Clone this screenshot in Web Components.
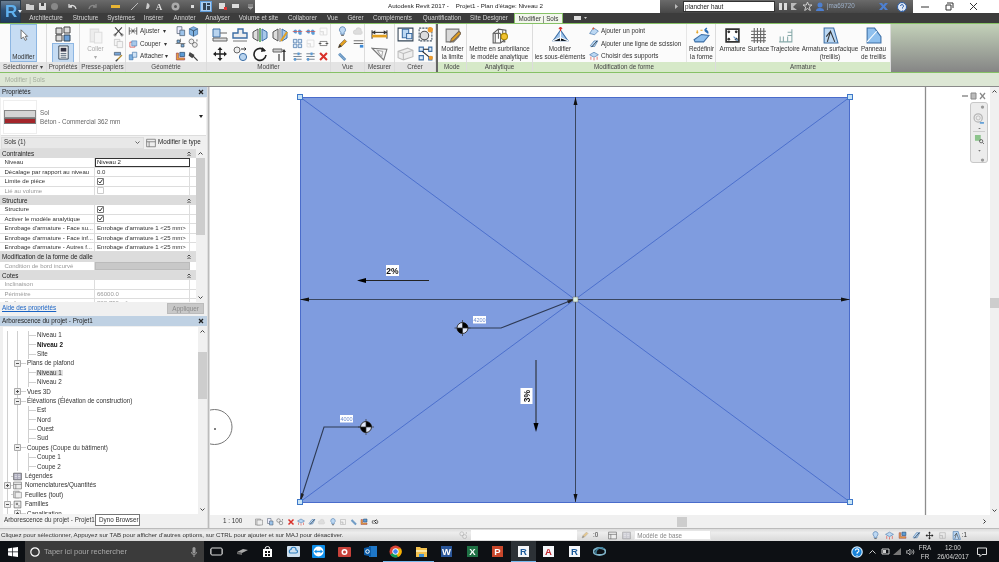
<!DOCTYPE html>
<html lang="fr">
<head>
<meta charset="utf-8">
<title>Revit</title>
<style>
	html, body { margin: 0; height: 100%; background: #fff; overflow: hidden; }
	body { font: 6.3px/1 "Liberation Sans", sans-serif; color: #222; }
</style>
</head>
<body>
<rv-app></rv-app>
<script>
// icon bodies, all on a 16x16 box
const ICONS = {
	cursor: '<path d="M5 1v11l3-2 2 4 2-1-2-4h3z" fill="#fff" stroke="#555"/>',
	panes: '<path d="M1 2h6v6H1zM9 1h6v6H9zM1 9h6v6H1z" fill="#ddd" stroke="#444"/><path d="M9 9h6v6H9z" fill="#6a9fd8" stroke="#345"/>',
	sheet: '<path d="M3 1h10v14H3z" fill="#f4f4f4" stroke="#345"/><path d="M5 3h6v4H5z" fill="#334"/><path d="M5 9h6M5 11h6M5 13h6" stroke="#567"/>',
	paste: '<path d="M3 2h8v12H3z" fill="#ddd" stroke="#bbb"/><path d="M7 5h7v10H7z" fill="#eee" stroke="#bbb"/>',
	scissors: '<path d="M3 2l10 11M13 2L3 13" stroke="#444" stroke-width="1.5"/><circle cx="3" cy="13" r="1.6" fill="none" stroke="#444"/><circle cx="13" cy="13" r="1.6" fill="none" stroke="#444"/>',
	copy: '<path d="M2 2h8v9H2z" fill="#eee" stroke="#777"/><path d="M6 5h8v9H6z" fill="#eee" stroke="#777"/>',
	brush: '<path d="M2 2h9v4H2z" fill="#7aa7d8" stroke="#456"/><path d="M13 6l-6 6" stroke="#b58b2a" stroke-width="2"/><path d="M7 12l-3 3" stroke="#444" stroke-width="2"/>',
	trim: '<path d="M2 2v12M14 2v12M2 8h12" stroke="#555" stroke-width="1.4"/><path d="M5 4l6 8M11 4l-6 8" stroke="#333"/>',
	cut: '<path d="M3 5h8v8H3z" fill="none" stroke="#d9534f" stroke-width="1.3"/><path d="M6 3h8v8H6z" fill="#a8c8ea" stroke="#4a7fb8"/>',
	join: '<path d="M2 6h6v8H2z" fill="#7db0e0" stroke="#3c6ea5"/><path d="M7 2h7v8H7z" fill="#cfe2f5" stroke="#3c6ea5"/>',
	g1: '<path d="M3 1h7v10H3z" fill="#eef" stroke="#456"/><path d="M7 6h7v8H7z" fill="#9cc3ea" stroke="#456"/>',
	g2: '<path d="M2 4l6-3 6 3v8l-6 3-6-3z" fill="#7db0e0" stroke="#3c6ea5"/><path d="M8 7v8M2 4l6 3 6-3" stroke="#234" fill="none"/>',
	g3: '<path d="M3 3h4v4H3zM9 9h4v4H9z" fill="#7db0e0" stroke="#345"/><path d="M1 8h14M8 1v5" stroke="#555"/>',
	g4: '<circle cx="5" cy="5" r="3.5" fill="#eee" stroke="#555"/><circle cx="10" cy="10" r="3.5" fill="#eee" stroke="#555"/><path d="M13 2v3" stroke="#333"/>',
	g5: '<path d="M2 13V3h3v7h9v3z" fill="#e8a33a" stroke="#945"/><path d="M7 2h7v6H7z" fill="#5b9bd5" stroke="#246"/>',
	hammer: '<path d="M3 3l5 3-2 3-4-3zM6 6l8 8" stroke="#444" stroke-width="2" fill="#555"/>',
	align: '<path d="M1 2h7v8H1z" fill="#b9d4ef" stroke="#3c6ea5"/><path d="M1 11h14v3H1z" fill="#ddd" stroke="#666"/><path d="M8 6h7" stroke="#666"/>',
	offset: '<path d="M1 11V6h5V2h5v4h4v5z" fill="#eee" stroke="#3c6ea5" stroke-width="1.4"/><path d="M1 14h14" stroke="#777"/>',
	mirrorA: '<path d="M8 1v14" stroke="#4a9a4a" stroke-width="1.5"/><path d="M6 2v12L1 11V5z" fill="#ddd" stroke="#555"/><path d="M10 2v12l5-3V5z" fill="#a8c8ea" stroke="#3c6ea5"/>',
	mirrorB: '<path d="M8 1v14" stroke="#777"/><path d="M6 2v12L1 11V5z" fill="#ddd" stroke="#555"/><path d="M10 2v12l5-3V5z" fill="#a8c8ea" stroke="#3c6ea5"/><path d="M9 14l6-9" stroke="#e2a020" stroke-width="2"/>',
	move: '<path d="M8 1l2.5 3h-5zM8 15l2.5-3h-5zM1 8l3-2.5v5zM15 8l-3-2.5v5z" fill="#222"/><path d="M8 3v10M3 8h10" stroke="#222" stroke-width="1.4"/>',
	copyRound: '<circle cx="5" cy="4" r="3" fill="#eee" stroke="#666"/><circle cx="11" cy="11" r="3.6" fill="#b9d4ef" stroke="#3c6ea5"/><path d="M9 3h5l-1.5-1.5M14 3l-1.5 1.5" stroke="#333" fill="none"/>',
	rotate: '<path d="M13 5a6 6 0 1 0 1 4" fill="none" stroke="#222" stroke-width="1.6"/><path d="M10 1l4 4-5 1z" fill="#222"/>',
	extend: '<path d="M1 3h9v3H1z" fill="#ccc" stroke="#666"/><path d="M12 15V6" stroke="#333" stroke-width="1.4"/><path d="M12 3l2 3h-4z" fill="#333"/><path d="M7 15V8" stroke="#888" stroke-width="2"/>',
	dotsH: '<path d="M2 8a3 3 0 0 1 5-2v4a3 3 0 0 1-5-2zM14 8a3 3 0 0 0-5-2v4a3 3 0 0 0 5 2z" fill="#5b9bd5"/><path d="M1 8h14" stroke="#d9534f"/>',
	arrayIcon: '<path d="M2 2h5v5H2zM9 2h5v5H9zM2 9h5v5H2zM9 9h5v5H9z" fill="#dcebf9" stroke="#3c6ea5"/>',
	scale: '<path d="M3 3h10v10H3z" fill="none" stroke="#aaa"/><path d="M3 8h5v5" fill="#ddd" stroke="#aaa"/>',
	pin: '<path d="M6 2h4v3l2 2v1H4V7l2-2zM8 8v6" stroke="#555" fill="#ccc"/>',
	unpin: '<path d="M3 5h10v6H3z" fill="none" stroke="#555"/><path d="M1 8h4M11 8h4" stroke="#222"/>',
	sliders: '<path d="M2 4h12M2 8h12M2 12h12" stroke="#456"/><path d="M8 2h3v4H8zM3 10h3v4H3z" fill="#5b9bd5"/>',
	del: '<path d="M3 3l10 10M13 3L3 13" stroke="#d9302a" stroke-width="3"/>',
	bulb: '<path d="M8 1a4.5 4.5 0 0 0-2.5 8.2V12h5V9.200A4.500 4.500 0 0 0 8 1z" fill="#bcd8f3" stroke="#3c6ea5"/><path d="M6 13.500h4" stroke="#555" stroke-width="1.500"/>',
	cloud: '<path d="M3 12a3 3 0 0 1 1-6 4 4 0 0 1 8 1 3 3 0 0 1 0 5z" fill="#ddd" stroke="#ccc"/>',
	pencil: '<path d="M2 14l2-5 7-7 3 3-7 7z" fill="#e2a020" stroke="#765"/><path d="M2 14l2-5 3 3z" fill="#333"/>',
	planes: '<path d="M1 4h14M1 8h14" stroke="#333"/><path d="M10 10h5v4h-5z" fill="#3c8ad8"/>',
	chain: '<path d="M3 4l9 9" stroke="#5b8fc0" stroke-width="4"/><path d="M3 4l9 9" stroke="#ddd" stroke-width="1" stroke-dasharray="2 1"/>',
	dim: '<path d="M1 4v8M15 4v8" stroke="#333"/><path d="M1 6h14" stroke="#333"/><path d="M1 6l3-2v4zM15 6l-3-2v4z" fill="#333"/><path d="M1 9.500h14" stroke="#e2a020" stroke-width="2.500"/>',
	angle: '<path d="M1 3l14 1-3 10z" fill="#f4f4f4" stroke="#777"/><path d="M6 5l5 1-1 5z" fill="#fff" stroke="#aaa"/>',
	comp: '<path d="M1 2h14v12H1z" fill="#fff" stroke="#345"/><path d="M5 3h6v8H5z" fill="#bcd8f3" stroke="#3c6ea5"/><path d="M9 7h5v5H9z" fill="#dbe9f7" stroke="#3c6ea5"/>',
	insitu: '<path d="M2 2h12v12H2z" fill="none" stroke="#456" stroke-dasharray="2 1"/><circle cx="7" cy="9" r="4" fill="#ddd" stroke="#555"/><circle cx="12.500" cy="3.500" r="2.500" fill="#ef9b2a"/>',
	box: '<path d="M1 6l9-3 5 2v6l-9 3-5-2z" fill="#eee" stroke="#bbb"/><path d="M1 6l5 2v6M6 8l9-3" stroke="#bbb" fill="none"/>',
	nodes: '<path d="M2 2h4v4H2zM11 2h3v4h-3zM2 10h4v4H2zM11 11h3v3h-3z" fill="#dcebf9" stroke="#3c6ea5"/><path d="M6 4h5M5 6l6 5" stroke="#222"/><circle cx="13" cy="12" r="2" fill="#ef9b2a"/>',
	editSketch: '<path d="M2 2h12v7l-5 5H2z" fill="#d9d9d9" stroke="#777"/><path d="M6 14l1-3 7-7 2 2-7 7z" fill="#e2a020" stroke="#765"/>',
	analytic: '<path d="M2 6l5-4 7 1v8l-5 4H2z" fill="none" stroke="#555"/><path d="M7 2v9M2 6h7M9 6v9M4 6v9M11 3v8" stroke="#666"/><circle cx="12.500" cy="9" r="3" fill="#f2c230" stroke="#a80"/><path d="M11.500 12.500h2v2h-2z" fill="#666"/>',
	subEl: '<path d="M8 3L1 13h14z" fill="#9fc5ec" stroke="#3c6ea5"/><path d="M8 3v10M1 13l7-3 7 3" stroke="#fff"/><path d="M8 0v4M6.500 2L8 0l1.500 2" stroke="#d9302a" fill="none"/>',
	addPoint: '<path d="M1 12l6-9 8 5-6 6z" fill="#bcd8f3" stroke="#3c6ea5"/><circle cx="7" cy="4" r="1.500" fill="#e2552a"/>',
	addLine: '<path d="M2 11l6-8h6l-5 9H3z" fill="#bcd8f3" stroke="#3c6ea5"/><path d="M4 13L13 3" stroke="#123" stroke-width="1.300"/>',
	supports: '<path d="M1 6l7-4 7 4-7 4z" fill="#bcd8f3" stroke="#3c6ea5"/><path d="M3 9v5M8 11v4M13 9v5" stroke="#d9302a"/>',
	reshape: '<path d="M1 12l7-5 7 1-5 6H2z" fill="#8fc0ee" stroke="#3c6ea5"/><path d="M3 5h2M4 3v3M7 3h2" stroke="#e2a020"/><path d="M11 3a3 3 0 0 1 3 3M11 3l2-2M11 3l2 2" stroke="#2b6db3" fill="none" stroke-width="1.400"/>',
	rebar: '<path d="M2 2h12v12H2z" fill="#fff" stroke="#333" stroke-width="1.600"/><circle cx="4.500" cy="4.500" r="1.300" fill="#333"/><circle cx="11.500" cy="4.500" r="1.300" fill="#333"/><circle cx="4.500" cy="11.500" r="1.300" fill="#333"/><circle cx="11.500" cy="11.500" r="1.300" fill="#333"/><path d="M9 9l4 4" stroke="#69c"/>',
	mesh: '<path d="M1 4h14M1 7h14M1 10h14M1 13h14M4 1v14M7 1v14M10 1v14M13 1v14" stroke="#666"/>',
	path: '<path d="M14 2v12H2M14 5h-4M14 8h-4M3 14V9M6 14V9M10 14V9" stroke="#8aa" fill="none"/>',
	fabric: '<path d="M2 1h9l4 14H2z" fill="#bcd8f3" stroke="#3c6ea5"/><path d="M5 14l3-10 4 10M4 9l4-5" stroke="#333" fill="none"/>',
	sheetmesh: '<path d="M2 1h7l6 8v6H2z" fill="#8fc0ee" stroke="#3c6ea5"/><path d="M2 14L11 4" stroke="#fff"/>',
	tree: '<path d="M1 2h14v12H1z" fill="#eee" stroke="#555"/><path d="M1 6h14M5 6v8" stroke="#555"/>',
	legend: '<path d="M1 2h14v12H1z" fill="#aab" stroke="#444"/><path d="M3 5h4M3 8h4M3 11h4M9 5h4M9 8h4M9 11h4" stroke="#fff"/>',
	sheets: '<path d="M1 2h10v12H1z" fill="#ddd" stroke="#777"/><path d="M4 4h11v10H4z" fill="#eee" stroke="#777"/>',
	family: '<path d="M2 2h12v12H2z" fill="#eee" stroke="#444"/><path d="M5 5h4v4H5z" fill="#888"/><path d="M9 9h3v3H9z" fill="#bbb"/>'
};

const BASE = ':host { box-sizing: border-box; } *, *::before, *::after { box-sizing: border-box; }';

class RvIco extends HTMLElement {
	constructor() {
		super();
		this.attachShadow({ mode: 'open' });
	}

	connectedCallback() {
		const size = this.getAttribute('size') || 11;
		const body = ICONS[this.getAttribute('name')] || '';
		const dim = this.hasAttribute('dim') ? 'opacity:.45;' : '';
		this.shadowRoot.innerHTML = `
			<style>:host { display: inline-flex; flex: none; line-height: 0; ${dim} }</style>
			<svg width="${size}" height="${size}" viewBox="0 0 16 16">${body}</svg>
		`;
	}
}
customElements.define('rv-ico', RvIco);

// the big R application button, it hangs over the title bar and the tab row
class RvAppButton extends HTMLElement {
	constructor() {
		super();
		this.attachShadow({ mode: 'open' });
		this.shadowRoot.innerHTML = `
			<style>
				${BASE}
				:host { position: absolute; left: 0; top: 0; z-index: 2; display: flex; align-items: center; justify-content: flex-start; width: 21px; height: 23px; padding-left: 4px; background: linear-gradient(#6b7f92, #2d4f74 45%, #1e3d60); border: 1px solid #2a3a4a; color: #5fb0ee; font: bold 17px/1 "Liberation Sans", sans-serif; }
				svg { margin-left: 1px; flex: none; }
			</style>
			R<svg width="4" height="3" viewBox="0 0 4 3"><path d="M0 0h4L2 3z" fill="#dfe8f0"/></svg>
		`;
	}
}
customElements.define('rv-app-button', RvAppButton);

// one slot of the quick access bar, light glyph on the dark title bar
class RvQat extends HTMLElement {
	constructor() {
		super();
		this.attachShadow({ mode: 'open' });
	}

	connectedCallback() {
		const w = this.getAttribute('w') || 12;
		const on = this.hasAttribute('on');
		this.shadowRoot.innerHTML = `
			<style>
				${BASE}
				:host { display: flex; flex: none; width: ${w}px; height: 13px; align-items: center; justify-content: center; }
				span { display: flex; width: 12px; height: 11px; align-items: center; justify-content: center; ${on ? 'background:#a9cdf0;border:1px solid #5d9ad8;' : ''} }
			</style>
			<span><slot></slot></span>
		`;
	}
}
customElements.define('rv-qat', RvQat);

class RvTitlebar extends HTMLElement {
	constructor() {
		super();
		this.attachShadow({ mode: 'open' });
		const svg = (body, w = 9) => `<svg width="${w}" height="9" viewBox="0 0 9 9">${body}</svg>`;
		const qat = [
			[4, 0, ''],
			[12, 0, svg('<path d="M0 2h3l1 1h4v5H0z" fill="#cfcfcf"/>')],
			[12, 0, svg('<path d="M1 1h7v7H1z" fill="#d8d8d8"/><path d="M3 1h3v3H3z" fill="#444"/>')],
			[12, 0, svg('<circle cx="4.500" cy="4.500" r="3.500" fill="#888"/>')],
			[6, 0, ''],
			[12, 0, svg('<path d="M8 7a4 4 0 0 0-6-3M1 2v3h3" fill="none" stroke="#ddd" stroke-width="1.300"/>')],
			[8, 0, ''],
			[12, 0, svg('<path d="M1 7a4 4 0 0 1 6-3M8 2v3H5" fill="none" stroke="#888" stroke-width="1.300"/>')],
			[10, 0, ''],
			[14, 0, svg('<path d="M0 3h9v3H0z" fill="#e9b533"/>', 11)],
			[5, 0, ''],
			[14, 0, svg('<path d="M1 8l7-7" stroke="#bbb"/>')],
			[12, 0, svg('<path d="M4 1a3 3 0 1 1-1 6z" fill="#ccc"/>')],
			[12, 0, '<b style="color:#ddd;font:bold 9px \'Liberation Serif\',serif">A</b>'],
			[4, 0, ''],
			[12, 0, svg('<circle cx="4.500" cy="4.500" r="4" fill="#aaa"/><circle cx="4.500" cy="4.500" r="1.500" fill="#555"/>')],
			[5, 0, ''],
			[12, 0, svg('<path d="M3 3h3v3H3z" fill="#ddd"/>')],
			[2, 0, ''],
			[12, 1, svg('<path d="M1 1h3v7H1zM5 1h3v2H5zM5 4h3v4H5z" fill="#345"/>')],
			[4, 0, ''],
			[12, 0, svg('<path d="M1 1h6v6H1z" fill="#ddd"/><path d="M6 5h3v3H6z" fill="#d33"/>')],
			[14, 0, svg('<path d="M1 2h7v4H1z" fill="#ddd"/>')],
			[3, 0, ''],
			[10, 0, svg('<path d="M2 3h5M2 5l2.500 2L7 5z" stroke="#aaa" fill="#aaa"/>')]
		].map(([w, on, body]) => `<rv-qat w="${w}" ${on ? 'on' : ''}>${body}</rv-qat>`).join('');

		this.shadowRoot.innerHTML = `
			<style>
				${BASE}
				:host { display: flex; position: relative; height: 13px; background: #fff; }
				.dark { display: flex; align-items: center; height: 13px; background: linear-gradient(#6a6a6a, #474747); }
				.qat { width: 255px; padding-left: 20px; flex: none; overflow: hidden; }
				.title { flex: 1; display: flex; align-items: center; padding-left: 133px; color: #222; white-space: pre; font-size: 6.2px; }
				.info { width: 253px; color: #e2e2e2; flex: none; }
				.tri { margin-left: 15px; flex: none; }
				.search { width: 92px; height: 11px; margin: 0 3px 0 5px; padding: 2px 1px; background: #fff; color: #222; border: 1px solid #333; white-space: nowrap; flex: none; }
				.user { color: #9db0c8; margin: 0 23px 0 3px; width: 29px; white-space: nowrap; }
				.win { width: 86px; display: flex; align-items: center; flex: none; }
				.win span { width: 24px; display: flex; justify-content: center; }
			</style>
			<rv-app-button></rv-app-button>
			<div class="dark qat">${qat}</div>
			<div class="title">Autodesk Revit 2017 -    Projet1 - Plan d'étage: Niveau 2</div>
			<div class="dark info">
				<svg class="tri" width="3" height="5" viewBox="0 0 3 5"><path d="M0 0l3 2.500L0 5z" fill="#bbb"/></svg>
				<div class="search">plancher haut</div>
				<svg width="10" height="9" viewBox="0 0 10 9"><path d="M1 1h3v7H1zM6 1h3v7H6z" fill="#ddd"/></svg>
				<svg style="margin-left:2px" width="9" height="9" viewBox="0 0 9 9"><path d="M1 1h6L3 5l4 3H1z" fill="#bbb"/></svg>
				<svg style="margin-left:4px" width="9" height="9" viewBox="0 0 9 9"><path d="M4.500 0l1.200 3H9L6.300 5l1 3.500-2.800-2-2.800 2 1-3.500L0 3h3.300z" fill="none" stroke="#ccc"/></svg>
				<svg style="margin-left:4px" width="8" height="9" viewBox="0 0 8 9"><circle cx="4" cy="3" r="2.500" fill="#4d7fd0"/><path d="M0 9a4 3 0 0 1 8 0z" fill="#4d7fd0"/></svg>
				<span class="user">jma69720</span>
				<svg width="9" height="9" viewBox="0 0 9 9"><path d="M0 1l3 0 1.500 2L6 1h3L6 4.500 9 8H6L4.500 6 3 8H0l3-3.500z" fill="#4d7fd0"/></svg>
				<svg style="margin-left:9px" width="10" height="10" viewBox="0 0 10 10"><circle cx="5" cy="5" r="4.500" fill="#dfe8f5" stroke="#2c5ea8"/><path d="M3.500 4a1.500 1.500 0 1 1 2 1.500V6.500M5.500 8v.5" stroke="#2c5ea8" fill="none"/></svg>
			</div>
			<div class="win">
				<span><svg width="9" height="9" viewBox="0 0 9 9"><path d="M0 5h8" stroke="#333"/></svg></span>
				<span><svg width="9" height="9" viewBox="0 0 9 9"><path d="M2 1h6v5M1 3h5v5H1z" stroke="#333" fill="none"/></svg></span>
				<span><svg width="9" height="9" viewBox="0 0 9 9"><path d="M1 1l7 7M8 1L1 8" stroke="#333"/></svg></span>
			</div>
		`;
	}
}
customElements.define('rv-titlebar', RvTitlebar);

class RvTabs extends HTMLElement {
	constructor() {
		super();
		this.attachShadow({ mode: 'open' });
		const tabs = [
			['Architecture', 44], ['Structure', 35], ['Systèmes', 36], ['Insérer', 29], ['Annoter', 33], ['Analyser', 33],
			['Volume et site', 49], ['Collaborer', 39], ['Vue', 21], ['Gérer', 25], ['Compléments', 49], ['Quantification', 50], ['Site Designer', 44]
		];
		this.shadowRoot.innerHTML = `
			<style>
				${BASE}
				:host { display: flex; height: 10px; padding-left: 24px; background: #3c3c3c; color: #d6d6d6; align-items: center; }
				span { display: block; text-align: center; white-space: nowrap; font-size: 6.3px; }
				.on { width: 49px; height: 11px; margin: 1px 0 0 3px; padding-top: 2px; background: #f2f7ec; color: #333; border: 1px solid #86c166; border-bottom: 0; border-radius: 1px 1px 0 0; }
				svg { margin-left: 11px; }
			</style>
			${tabs.map(([t, w]) => `<span style="width:${w}px">${t}</span>`).join('')}
			<span class="on">Modifier | Sols</span>
			<svg width="14" height="6" viewBox="0 0 14 6"><path d="M0 1h7v4H0z" fill="#ddd"/><path d="M10 2h3l-1.500 2z" fill="#ccc"/></svg>
		`;
	}
}
customElements.define('rv-tabs', RvTabs);

class RvPanel extends HTMLElement {
	constructor() {
		super();
		this.attachShadow({ mode: 'open' });
	}

	connectedCallback() {
		const w = this.getAttribute('w');
		const label = this.getAttribute('label');
		const green = this.hasAttribute('green');
		this.shadowRoot.innerHTML = `
			<style>
				${BASE}
				:host { display: flex; flex-direction: column; flex: none; width: ${w}px; border-right: 1px solid #dcdcdc; }
				.body { flex: 1; display: flex; height: 39px; overflow: hidden; }
				.label { height: 10px; line-height: 10px; text-align: center; color: #444; white-space: nowrap; background: ${green ? '#d6e9c8' : '#e4e4e4'}; }
			</style>
			<div class="body"><slot></slot></div>
			<div class="label">${label}</div>
		`;
	}
}
customElements.define('rv-panel', RvPanel);

// grid of small tools inside a panel
class RvCells extends HTMLElement {
	constructor() {
		super();
		this.attachShadow({ mode: 'open' });
	}

	connectedCallback() {
		const cols = this.getAttribute('cols');
		const rows = this.getAttribute('rows') || '12.500px 12.500px 12.500px';
		const pad = this.getAttribute('pad') || '1px 0 0 0';
		this.shadowRoot.innerHTML = `
			<style>
				${BASE}
				:host { display: grid; grid-template-columns: ${cols}; grid-template-rows: ${rows}; padding: ${pad}; align-items: center; justify-items: center; flex: none; }
			</style>
			<slot></slot>
		`;
	}
}
customElements.define('rv-cells', RvCells);

// big ribbon button: icon on top, one or two lines of text
class RvTool extends HTMLElement {
	constructor() {
		super();
		this.attachShadow({ mode: 'open' });
	}

	connectedCallback() {
		const w = this.getAttribute('w');
		const icon = this.getAttribute('icon');
		const lines = (this.getAttribute('label') || '').split('|');
		const on = this.hasAttribute('on');
		const dim = this.hasAttribute('dim');
		this.shadowRoot.innerHTML = `
			<style>
				${BASE}
				:host { display: flex; flex-direction: column; align-items: center; flex: none; width: ${w}px; height: 38px; padding-top: 2px; ${on ? 'background:#c6dcf3;border:1px solid #8db6e2;' : ''} color: ${dim ? '#aaa' : '#333'}; }
				.icon { height: 18px; display: flex; align-items: center; }
				.t { margin-top: 1px; }
				div.l { height: 8px; line-height: 8px; white-space: nowrap; text-align: center; }
			</style>
			<div class="icon"><rv-ico name="${icon}" size="${this.getAttribute('size') || 17}" ${dim ? 'dim' : ''}></rv-ico></div>
			<div class="t">${lines.map(l => `<div class="l">${l}</div>`).join('')}</div>
		`;
	}
}
customElements.define('rv-tool', RvTool);

// row tool: small icon followed by a label
class RvRowTool extends HTMLElement {
	constructor() {
		super();
		this.attachShadow({ mode: 'open' });
	}

	connectedCallback() {
		this.shadowRoot.innerHTML = `
			<style>
				${BASE}
				:host { display: flex; align-items: center; gap: 2px; width: 100%; white-space: nowrap; color: #333; }
			</style>
			<rv-ico name="${this.getAttribute('icon')}" size="10"></rv-ico><span>${this.getAttribute('label')}</span>
		`;
	}
}
customElements.define('rv-row-tool', RvRowTool);

class RvRibbon extends HTMLElement {
	constructor() {
		super();
		this.attachShadow({ mode: 'open' });
		const ico = (n, s, d) => `<rv-ico name="${n}" ${s ? `size="${s}"` : ''} ${d ? 'dim' : ''}></rv-ico>`;
		this.shadowRoot.innerHTML = `
			<style>
				${BASE}
				:host { display: flex; height: 50px; background: #fbfbfb; border-top: 1px solid #86c166; border-bottom: 1px solid #86c166; }
				.fill { flex: 1; background: linear-gradient(#c3d1b9, #858585); }
				.thick { flex: none; width: 2px; background: #666; }
				.pad { flex: none; }
				.selbox { background: #c6dcf3; outline: 1px solid #8db6e2; width: 20px; height: 18px; display: flex; align-items: center; justify-content: center; }
				.sep { flex: none; width: 1px; background: #e6e6e6; margin-left: 1px; }
			</style>
			<rv-panel w="47" label="Sélectionner ▾">
				<span class="pad" style="width:10px"></span><rv-tool w="27" icon="cursor" size="13" label="|Modifier" on></rv-tool>
			</rv-panel>
			<rv-panel w="33" label="Propriétés">
				<rv-cells cols="32px" rows="18px 19px" pad="1px 0 0 0">${ico('panes', 16)}<span class="selbox">${ico('sheet', 15)}</span></rv-cells>
			</rv-panel>
			<rv-panel w="46" label="Presse-papiers">
				<rv-tool w="31" icon="paste" label="Coller|▾" dim></rv-tool>
				<rv-cells cols="14px">${ico('scissors')}${ico('copy', 11, 1)}${ico('brush')}</rv-cells>
			</rv-panel>
			<rv-panel w="81" label="Géométrie">
				<rv-cells cols="46px" pad="1px 0 0 2px">
					<rv-row-tool icon="trim" label="Ajuster &nbsp;▾"></rv-row-tool>
					<rv-row-tool icon="cut" label="Couper &nbsp;▾"></rv-row-tool>
					<rv-row-tool icon="join" label="Attacher ▾"></rv-row-tool>
				</rv-cells>
				<rv-cells cols="13px 13px" pad="1px 0 0 0">${ico('g1')}${ico('g2')}${ico('g3')}${ico('g4')}${ico('g5')}${ico('hammer')}</rv-cells>
			</rv-panel>
			<rv-panel w="124" label="Modifier">
				<rv-cells cols="20px 20px 20px 20px" rows="19px 19px" pad="1px 0 0 3px">
					${ico('align', 16)}${ico('offset', 16)}${ico('mirrorA', 16)}${ico('mirrorB', 16)}
					${ico('move', 16)}${ico('copyRound', 16)}${ico('rotate', 16)}${ico('extend', 16)}
				</rv-cells>
				<rv-cells cols="13px 13px 13px" pad="1px 0 0 1px">
					${ico('dotsH')}${ico('dotsH')}${ico('scale', 11, 1)}
					${ico('arrayIcon')}${ico('scale', 11, 1)}${ico('unpin')}
					${ico('sliders')}${ico('sliders')}${ico('del')}
				</rv-cells>
			</rv-panel>
			<rv-panel w="34" label="Vue">
				<rv-cells cols="18px 14px" pad="1px 0 0 2px">${ico('bulb')}${ico('cloud')}${ico('pencil')}${ico('planes')}${ico('chain')}<span></span></rv-cells>
			</rv-panel>
			<rv-panel w="30" label="Mesurer">
				<rv-cells cols="28px" rows="19px 19px" pad="1px 0 0 0">${ico('dim', 17)}${ico('angle', 17)}</rv-cells>
			</rv-panel>
			<rv-panel w="41" label="Créer">
				<rv-cells cols="20px 20px" rows="19px 19px" pad="1px 0 0 0">${ico('comp', 17)}${ico('insitu', 17)}${ico('box', 17)}${ico('nodes', 17)}</rv-cells>
			</rv-panel>
			<span class="thick"></span>
			<rv-panel w="29" label="Mode" green>
				<rv-tool w="29" icon="editSketch" label="Modifier|la limite"></rv-tool>
			</rv-panel>
			<rv-panel w="66" label="Analytique" green>
				<rv-tool w="65" icon="analytic" label="Mettre en surbrillance|le modèle analytique"></rv-tool>
			</rv-panel>
			<rv-panel w="183" label="Modification de forme" green>
				<rv-tool w="54" icon="subEl" label="Modifier|les sous-éléments"></rv-tool>
				<rv-cells cols="96px" pad="1px 0 0 2px" style="width:98px">
					<rv-row-tool icon="addPoint" label="Ajouter un point"></rv-row-tool>
					<rv-row-tool icon="addLine" label="Ajouter une ligne de scission"></rv-row-tool>
					<rv-row-tool icon="supports" label="Choisir des supports"></rv-row-tool>
				</rv-cells>
				<span class="sep"></span>
				<rv-tool w="29" icon="reshape" label="Redéfinir|la forme"></rv-tool>
			</rv-panel>
			<rv-panel w="175" label="Armature" green>
				<span class="pad" style="width:2px"></span>
				<rv-tool w="29" icon="rebar" label="Armature"></rv-tool>
				<rv-tool w="23" icon="mesh" label="Surface"></rv-tool>
				<rv-tool w="30" icon="path" label="Trajectoire"></rv-tool>
				<rv-tool w="60" icon="fabric" label="Armature surfacique|(treillis)"></rv-tool>
				<rv-tool w="27" icon="sheetmesh" label="Panneau|de treillis"></rv-tool>
			</rv-panel>
			<div class="fill"></div>
		`;
	}
}
customElements.define('rv-ribbon', RvRibbon);

class RvOptions extends HTMLElement {
	constructor() {
		super();
		this.attachShadow({ mode: 'open' });
		this.shadowRoot.innerHTML = `
			<style>
				${BASE}
				:host { display: flex; align-items: center; height: 14px; padding: 1px 0 0 5px; background: #dde7d5; color: #a4ad9e; border-bottom: 1px solid #8a8a8a; }
			</style>
			Modifier | Sols
		`;
	}
}
customElements.define('rv-options', RvOptions);

class RvPaneHead extends HTMLElement {
	constructor() {
		super();
		this.attachShadow({ mode: 'open' });
		this.shadowRoot.innerHTML = `
			<style>
				${BASE}
				:host { display: flex; align-items: center; justify-content: space-between; height: 10px; padding: 0 3px 0 2px; background: #bfd1e3; color: #222; }
				svg { flex: none; }
			</style>
			<slot></slot>
			<svg width="6" height="6" viewBox="0 0 6 6"><path d="M1 1l4 4M5 1L1 5" stroke="#222" stroke-width="1.300"/></svg>
		`;
	}
}
customElements.define('rv-pane-head', RvPaneHead);

class RvPropRow extends HTMLElement {
	constructor() {
		super();
		this.attachShadow({ mode: 'open' });
	}

	connectedCallback() {
		const name = this.getAttribute('name');
		const value = this.getAttribute('value') || '';
		const type = this.getAttribute('type') || 'text';
		const dim = this.hasAttribute('dim');
		let cell = `<div class="val">${value}</div>`;
		if (type === 'edit') cell = `<div class="val edit">${value}</div>`;
		if (type === 'check') cell = `<div class="val"><svg width="7" height="7" viewBox="0 0 7 7"><path d="M.5.500h6v6h-6z" fill="#fff" stroke="${dim ? '#ccc' : '#777'}"/>${value ? '<path d="M1.500 3.500l1.500 1.500 2.500-3.500" stroke="#333" fill="none"/>' : ''}</svg></div>`;
		if (type === 'na') cell = `<div class="val na">${value}</div>`;
		this.shadowRoot.innerHTML = `
			<style>
				${BASE}
				:host { display: grid; grid-template-columns: 95px 95px 6px; height: 9.400px; background: #fff; border-bottom: 1px solid #ddd; color: ${dim ? '#999' : '#333'}; font-size: 6.050px; }
				.name { padding-left: 4.500px; line-height: 8.400px; white-space: nowrap; overflow: hidden; border-right: 1px solid #ddd; }
				.val { padding-left: 2px; line-height: 8.400px; white-space: nowrap; overflow: hidden; display: flex; align-items: center; border-right: 1px solid #ddd; }
				.edit { border: 1px solid #333; color: #222; padding-left: 1px; }
				.na { background: #c8c8c8; color: #888; justify-content: center; border: 1px solid #bbb; }
				.end { display: block; }
			</style>
			<div class="name">${name}</div>${cell}<div class="end"></div>
		`;
	}
}
customElements.define('rv-prop-row', RvPropRow);

class RvPropGroup extends HTMLElement {
	constructor() {
		super();
		this.attachShadow({ mode: 'open' });
		this.shadowRoot.innerHTML = `
			<style>
				${BASE}
				:host { display: flex; align-items: center; justify-content: space-between; height: 9.400px; padding: 0 5px 0 2px; background: #dcdcdc; color: #222; white-space: nowrap; }
				svg { flex: none; }
			</style>
			<slot></slot>
			<svg width="4" height="6" viewBox="0 0 4 6"><path d="M.5 2.500L2 1l1.500 1.500M.5 5L2 3.500 3.500 5" stroke="#222" fill="none" stroke-width=".8"/></svg>
		`;
	}
}
customElements.define('rv-prop-group', RvPropGroup);

// plain scrollbar track, thumb placed by the top/len attributes in flow
class RvVscroll extends HTMLElement {
	constructor() {
		super();
		this.attachShadow({ mode: 'open' });
	}

	connectedCallback() {
		const top = this.getAttribute('top');
		const len = this.getAttribute('len');
		const w = this.getAttribute('w') || 8;
		this.shadowRoot.innerHTML = `
			<style>
				${BASE}
				:host { display: flex; flex-direction: column; flex: none; width: ${w}px; background: #f0f0f0; align-items: center; }
				svg { flex: none; margin: 3px 0; }
				.track { flex: 1; width: 100%; }
				.thumb { width: 100%; height: ${len}px; margin-top: ${top}px; background: #cdcdcd; }
			</style>
			<svg width="5" height="3" viewBox="0 0 5 3"><path d="M.5 2.500L2.500.5l2 2" stroke="#444" fill="none"/></svg>
			<div class="track"><div class="thumb"></div></div>
			<svg width="5" height="3" viewBox="0 0 5 3"><path d="M.5.500l2 2 2-2" stroke="#444" fill="none"/></svg>
		`;
	}
}
customElements.define('rv-vscroll', RvVscroll);

class RvProperties extends HTMLElement {
	constructor() {
		super();
		this.attachShadow({ mode: 'open' });
		const ench = 'Enrobage d\'armature 1 &lt;25 mm&gt;';
		this.shadowRoot.innerHTML = `
			<style>
				${BASE}
				:host { display: flex; flex-direction: column; height: 231px; background: #f0f0f0; }
				.type { display: flex; align-items: center; height: 38px; margin: 1px 1px 0 1px; background: #fff; padding-left: 2px; border-bottom: 1px solid #ddd; }
				.swatch { display: flex; flex-direction: column; justify-content: center; width: 34px; height: 34px; flex: none; margin-right: 3px; background: #fff; border: 1px solid #eee; }
				.sw1 { height: 8px; background: #d4d4d4; border: 1px solid #888; }
				.sw2 { height: 6px; background: #a3252a; border: 1px solid #777; }
				.names { flex: 1; color: #666; line-height: 8.500px; padding-top: 2px; }
				.more { margin-right: 3px; }
				.sel { display: flex; align-items: center; height: 13px; gap: 2px; margin-top: 0; padding: 0 1px; }
				.combo { display: flex; align-items: center; justify-content: space-between; width: 143px; height: 12px; padding: 0 3px 0 2px; background: #e8e8e8; border: 1px solid #ddd; color: #333; }
				.edit { display: flex; align-items: center; gap: 2px; white-space: nowrap; color: #222; }
				.grid { display: flex; height: 153px; }
				.rows { width: 196px; overflow: hidden; }
				.foot { display: flex; align-items: center; justify-content: space-between; flex: 1; padding: 0 3px 2px 2px; }
				a { color: #1a63c4; text-decoration: underline; }
				button { all: unset; box-sizing: border-box; display: block; width: 37px; height: 11px; line-height: 10px; text-align: center; background: #c8c8c8; border: 1px solid #bbb; color: #8a8a8a; }
			</style>
			<rv-pane-head>Propriétés</rv-pane-head>
			<div class="type">
				<div class="swatch"><div class="sw1"></div><div class="sw2"></div></div>
				<div class="names">Sol<br>Béton - Commercial 362 mm</div>
				<svg class="more" width="4" height="3" viewBox="0 0 4 3"><path d="M0 0h4L2 3z" fill="#222"/></svg>
			</div>
			<div class="sel">
				<div class="combo">Sols (1)<svg width="5" height="3" viewBox="0 0 5 3"><path d="M.5.500l2 2 2-2" stroke="#666" fill="none"/></svg></div>
				<div class="edit"><rv-ico name="tree" size="10"></rv-ico>Modifier le type</div>
			</div>
			<div class="grid">
				<div class="rows">
					<rv-prop-group>Contraintes</rv-prop-group>
					<rv-prop-row name="Niveau" value="Niveau 2" type="edit"></rv-prop-row>
					<rv-prop-row name="Décalage par rapport au niveau" value="0.0"></rv-prop-row>
					<rv-prop-row name="Limite de pièce" value="1" type="check"></rv-prop-row>
					<rv-prop-row name="Lié au volume" type="check" dim></rv-prop-row>
					<rv-prop-group>Structure</rv-prop-group>
					<rv-prop-row name="Structure" value="1" type="check"></rv-prop-row>
					<rv-prop-row name="Activer le modèle analytique" value="1" type="check"></rv-prop-row>
					<rv-prop-row name="Enrobage d'armature - Face su..." value="${ench}"></rv-prop-row>
					<rv-prop-row name="Enrobage d'armature - Face inf..." value="${ench}"></rv-prop-row>
					<rv-prop-row name="Enrobage d'armature - Autres f..." value="${ench}"></rv-prop-row>
					<rv-prop-group>Modification de la forme de dalle</rv-prop-group>
					<rv-prop-row name="Condition de bord incurvé" value="&lt;Non applicable&gt;" type="na" dim></rv-prop-row>
					<rv-prop-group>Cotes</rv-prop-group>
					<rv-prop-row name="Inclinaison" dim></rv-prop-row>
					<rv-prop-row name="Périmètre" value="66000.0" dim></rv-prop-row>
					<rv-prop-row name="Surface" value="222.750 m²" dim></rv-prop-row>
				</div>
				<rv-vscroll top="0" len="77" w="9"></rv-vscroll>
			</div>
			<div class="foot"><a>Aide des propriétés</a><button>Appliquer</button></div>
		`;
	}
}
customElements.define('rv-properties', RvProperties);

class RvTreeRow extends HTMLElement {
	constructor() {
		super();
		this.attachShadow({ mode: 'open' });
	}

	connectedCallback() {
		const level = +this.getAttribute('level') || 0;
		const exp = this.getAttribute('exp');
		const icon = this.getAttribute('icon');
		const bold = this.hasAttribute('bold');
		const sel = this.hasAttribute('sel');
		// guide lines: root trunk at 4px, level 1 trunk at 14px, level 2 trunk at 25px
		const line = x => `linear-gradient(#cfcfcf, #cfcfcf) ${x}px 0 / 1px 100% no-repeat`;
		const bg = [line(4)];
		if (level >= 1) bg.push(line(14));
		if (level === 2) bg.push(line(25));
		const box = exp ? `<svg class="box" width="7" height="7" viewBox="0 0 7 7"><path d="M.5.500h6v6h-6z" fill="#eee" stroke="#aaa"/><path d="M2 3.500h3${exp === '+' ? 'M3.500 2v3' : ''}" stroke="#555"/></svg>` : '';
		const pad = [1, 11, 25][level];
		const conn = [2, 5, 8][level];
		this.shadowRoot.innerHTML = `
			<style>
				${BASE}
				:host { display: flex; align-items: center; height: 9.400px; padding-left: ${pad}px; white-space: nowrap; color: #333; background: ${bg.join(',')}; }
				.box { flex: none; }
				.slot { display: inline-block; flex: none; width: ${exp || level === 2 ? 0 : 7}px; }
				.conn { flex: none; width: ${conn}px; height: 1px; background: #cfcfcf; }
				.t { padding: 0 1px; ${bold ? 'font-weight: bold; color: #111;' : ''} ${sel ? 'background: #e2e2e2;' : ''} }
				rv-ico { margin-right: 2px; }
			</style>
			${level === 2 ? '' : `<span class="slot"></span>`}${box}<span class="conn"></span>${icon ? `<rv-ico name="${icon}" size="9"></rv-ico>` : ''}<span class="t"><slot></slot></span>
		`;
	}
}
customElements.define('rv-tree-row', RvTreeRow);

class RvBrowser extends HTMLElement {
	constructor() {
		super();
		this.attachShadow({ mode: 'open' });
		this.shadowRoot.innerHTML = `
			<style>
				${BASE}
				:host { display: flex; flex-direction: column; height: 198px; background: #f0f0f0; }
				.body { flex: 1; display: flex; margin: 1px 0 0 3px; background: #fff; overflow: hidden; min-height: 0; }
				.rows { flex: 1; overflow: hidden; padding-top: 3.500px; }
			</style>
			<rv-pane-head>Arborescence du projet - Projet1</rv-pane-head>
			<div class="body">
				<div class="rows">
					<rv-tree-row level="2">Niveau 1</rv-tree-row>
					<rv-tree-row level="2" bold>Niveau 2</rv-tree-row>
					<rv-tree-row level="2">Site</rv-tree-row>
					<rv-tree-row level="1" exp="-">Plans de plafond</rv-tree-row>
					<rv-tree-row level="2" sel>Niveau 1</rv-tree-row>
					<rv-tree-row level="2">Niveau 2</rv-tree-row>
					<rv-tree-row level="1" exp="+">Vues 3D</rv-tree-row>
					<rv-tree-row level="1" exp="-">Élévations (Élévation de construction)</rv-tree-row>
					<rv-tree-row level="2">Est</rv-tree-row>
					<rv-tree-row level="2">Nord</rv-tree-row>
					<rv-tree-row level="2">Ouest</rv-tree-row>
					<rv-tree-row level="2">Sud</rv-tree-row>
					<rv-tree-row level="1" exp="-">Coupes (Coupe du bâtiment)</rv-tree-row>
					<rv-tree-row level="2">Coupe 1</rv-tree-row>
					<rv-tree-row level="2">Coupe 2</rv-tree-row>
					<rv-tree-row icon="legend">Légendes</rv-tree-row>
					<rv-tree-row exp="+" icon="tree">Nomenclatures/Quantités</rv-tree-row>
					<rv-tree-row icon="sheets">Feuilles (tout)</rv-tree-row>
					<rv-tree-row exp="-" icon="family">Familles</rv-tree-row>
					<rv-tree-row level="1" exp="+">Canalisation</rv-tree-row>
				</div>
				<rv-vscroll top="16" len="47" w="9"></rv-vscroll>
			</div>
		`;
	}
}
customElements.define('rv-browser', RvBrowser);

class RvBrowserTabs extends HTMLElement {
	constructor() {
		super();
		this.attachShadow({ mode: 'open' });
		this.shadowRoot.innerHTML = `
			<style>
				${BASE}
				:host { display: flex; height: 14px; background: #f0f0f0; align-items: flex-start; padding-left: 3px; color: #333; white-space: nowrap; }
				span { display: block; height: 12px; line-height: 11px; padding: 0 3px; }
				.a { width: 92px; padding: 0 1px; background: #f4f4f4; }
				.b { width: 45px; background: #fff; border: 1px solid #777; line-height: 10px; }
			</style>
			<span class="a">Arborescence du projet - Projet1</span><span class="b">Dyno Browser</span>
		`;
	}
}
customElements.define('rv-browser-tabs', RvBrowserTabs);

class RvNavBar extends HTMLElement {
	constructor() {
		super();
		this.attachShadow({ mode: 'open' });
		this.shadowRoot.innerHTML = `
			<style>
				${BASE}
				:host { position: absolute; right: 2px; top: 15px; display: flex; flex-direction: column; align-items: center; width: 18px; height: 61px; background: #ececec; border: 1px solid #c8c8c8; border-radius: 3px; }
				svg { display: block; }
				.sep { width: 12px; height: 1px; background: #ccc; margin: 2px 0; }
			</style>
			<svg style="margin:2px 0 0 7px" width="5" height="5" viewBox="0 0 5 5"><circle cx="2.500" cy="2.500" r="2" fill="#999"/></svg>
			<svg style="margin-top:4px" width="14" height="14" viewBox="0 0 14 14"><circle cx="6" cy="6" r="5" fill="none" stroke="#b5b5b5" stroke-width="1.500"/><circle cx="6" cy="6" r="2.500" fill="none" stroke="#b5b5b5"/><path d="M8 11h5v2H8z" fill="#5b9bd5"/></svg>
			<svg style="margin-top:3px" width="3" height="2" viewBox="0 0 3 2"><path d="M0 0h3L1.500 2z" fill="#777"/></svg>
			<div class="sep"></div>
			<svg style="margin-top:1px" width="11" height="11" viewBox="0 0 11 11"><path d="M0 0h7v7H0z" fill="#8cc48c"/><circle cx="7.500" cy="7.500" r="2" fill="none" stroke="#555"/><path d="M9 9l2 2" stroke="#555"/></svg>
			<svg style="margin-top:6px" width="3" height="2" viewBox="0 0 3 2"><path d="M0 0h3L1.500 2z" fill="#777"/></svg>
			<svg style="margin:6px 0 0 7px" width="5" height="5" viewBox="0 0 5 5"><circle cx="2.500" cy="2.500" r="2" fill="#999"/></svg>
		`;
	}
}
customElements.define('rv-nav-bar', RvNavBar);

class RvCanvas extends HTMLElement {
	constructor() {
		super();
		this.attachShadow({ mode: 'open' });
		const grip = (x, y) => `<rect x="${x - 2.500}" y="${y - 2.500}" width="5" height="5" fill="#c8e4f5" stroke="#3f78c9"/>`;
		const spot = (x, y) => `
			<circle cx="${x}" cy="${y}" r="5.500" fill="#dfe6f7" stroke="#333"/>
			<path d="M${x} ${y - 5.500}A5.500 5.500 0 0 1 ${x + 5.500} ${y}H${x}zM${x} ${y + 5.500}A5.500 5.500 0 0 1 ${x - 5.500} ${y}H${x}z" fill="#000"/>
			<path d="M${x - 8} ${y}h16M${x} ${y - 8}v16" stroke="#333" stroke-width=".7"/>
		`;
		const tag = (x, y, w, h, t) => `<rect x="${x}" y="${y}" width="${w}" height="${h}" fill="#fff"/><text x="${x + w / 2}" y="${y + h - 1.500}" text-anchor="middle" font-size="5.500" fill="#6d8ccf">${t}</text>`;
		this.shadowRoot.innerHTML = `
			<style>
				${BASE}
				:host { display: block; position: relative; flex: 1; overflow: hidden; background: #fff; }
				svg.plan { display: block; font-family: "Liberation Sans", sans-serif; }
			</style>
			<svg class="plan" width="780" height="429" viewBox="210 87 780 429">
				<circle cx="214.500" cy="427" r="17.500" fill="none" stroke="#777"/>
				<path d="M214 429h2" stroke="#000"/>
				<rect x="300.500" y="97.500" width="549" height="405" fill="#7f9cdf" stroke="#4a6ccb"/>
				<path d="M300 97l550 405M850 97L300 502" stroke="#3f64c8" stroke-width=".8"/>
				<path d="M300.500 299.500h549M575.500 97v405" stroke="#39465f"/>
				<path d="M300 299.500l9-2v4zM850 299.500l-9-2v4zM575.500 97l-2 8h4zM575.500 502l-2-8h4z" fill="#111"/>
				<path d="M429 280.500h-64" stroke="#222"/><path d="M357 280.500l9-2.500v5z" fill="#000"/>
				<rect x="386" y="265" width="13" height="11" fill="#fff"/>
				<text x="392.500" y="274" text-anchor="middle" font-size="8.500" font-weight="bold" fill="#111">2%</text>
				<path d="M536 360v64" stroke="#222"/><path d="M536 432l-2.500-9h5z" fill="#000"/>
				<rect x="520.500" y="388" width="12" height="16" fill="#fff"/>
				<text transform="translate(529.500 396) rotate(-90)" text-anchor="middle" font-size="8.500" font-weight="bold" fill="#111">3%</text>
				<path d="M462 328h39l74-29M366 427h-42l-24 75" fill="none" stroke="#2e3a55" stroke-width="1.100"/>
				<path d="M575 299l-8 1.500 1.500 3zM300 502l1-9 3 1.500z" fill="#222"/>
				${spot(462.500, 328)}${spot(366, 427)}
				${tag(473, 316, 13, 7.500, '4200')}${tag(340, 415, 13, 7.500, '4000')}
				${grip(300, 97)}${grip(850, 97)}${grip(300, 502)}${grip(850, 502)}
				<rect x="573" y="297" width="5" height="5" fill="#d9efe2" stroke="#777" stroke-width=".6"/>
				<path d="M925.500 87v429" stroke="#8d8d8d" stroke-width="1.300"/>
				<g transform="translate(962 92)" stroke="#888" fill="#aaa">
					<path d="M0 3h6v2H0z" stroke="none"/><path d="M9 1h5v6H9z" fill="#bbb"/><path d="M18 1l5 6M23 1l-5 6" fill="none" stroke-width="1.200"/>
				</g>
			</svg>
			<rv-nav-bar></rv-nav-bar>
		`;
	}
}
customElements.define('rv-canvas', RvCanvas);

class RvViewBar extends HTMLElement {
	constructor() {
		super();
		this.attachShadow({ mode: 'open' });
		const ico = ['sheets', 'g1', 'g4', 'del', 'supports', 'addLine', 'cloud', 'bulb', 'scale', 'chain', 'g5', 'unpin'];
		this.shadowRoot.innerHTML = `
			<style>
				${BASE}
				:host { display: flex; align-items: center; height: 13px; background: #f0f0f0; color: #333; }
				.scale { width: 45px; padding-left: 13px; white-space: nowrap; flex: none; }
				.icons { display: flex; width: 117px; gap: 2.500px; flex: none; }
				.track { flex: 1; height: 10px; display: flex; margin: 0 5px; }
				.thumb { width: 10px; height: 10px; margin-left: 295px; background: #cdcdcd; }
				svg { flex: none; }
			</style>
			<div class="scale">1 : 100</div>
			<div class="icons">${ico.map(n => `<rv-ico name="${n}" size="8"></rv-ico>`).join('')}</div>
			<svg style="margin-left:2px" width="3" height="5" viewBox="0 0 3 5"><path d="M2.500.500l-2 2 2 2" stroke="#333" fill="none"/></svg>
			<div class="track"><div class="thumb"></div></div>
			<svg width="3" height="5" viewBox="0 0 3 5" style="margin-right:13px"><path d="M.5.500l2 2-2 2" stroke="#333" fill="none"/></svg>
		`;
	}
}
customElements.define('rv-view-bar', RvViewBar);

class RvStatus extends HTMLElement {
	constructor() {
		super();
		this.attachShadow({ mode: 'open' });
		const tray = ['bulb', 'supports', 'g5', 'addLine', 'move', 'scale', 'fabric'];
		this.shadowRoot.innerHTML = `
			<style>
				${BASE}
				:host { display: flex; align-items: center; height: 13px; background: linear-gradient(#dcdcdc, #ededed 30%, #d9d9d9); color: #333; border-top: 1px solid #bbb; white-space: nowrap; }
				.msg { width: 459px; padding-left: 1px; flex: none; overflow: hidden; font-size: 6.200px; }
				.field { height: 10px; background: #fff; flex: none; }
				.mod { padding-left: 2px; color: #888; line-height: 10px; }
				.tray { display: flex; gap: 4.400px; margin-left: 2px; }
			</style>
			<div class="msg">Cliquez pour sélectionner, Appuyez sur TAB pour afficher d'autres options, sur CTRL pour ajouter et sur MAJ pour désactiver.</div>
			<rv-ico name="g4" size="9" dim></rv-ico>
			<div class="field" style="width:106px;margin-left:3px"></div>
			<rv-ico name="pencil" size="8" dim style="margin-left:4px"></rv-ico>
			<span style="margin-left:4px">:0</span>
			<rv-ico name="tree" size="9" style="margin-left:10px"></rv-ico>
			<rv-ico name="legend" size="9" dim style="margin-left:5px"></rv-ico>
			<div class="field mod" style="width:77px;margin-left:3px;border:1px solid #e6e6e6">Modèle de base</div>
			<div style="flex:1"></div>
			<div class="tray">${tray.map(n => `<rv-ico name="${n}" size="9"></rv-ico>`).join('')}</div>
			<span style="margin:0 32px 0 1px">:1</span>
		`;
	}
}
customElements.define('rv-status', RvStatus);

class RvTaskIcon extends HTMLElement {
	constructor() {
		super();
		this.attachShadow({ mode: 'open' });
	}

	connectedCallback() {
		const on = this.getAttribute('state');
		this.shadowRoot.innerHTML = `
			<style>
				${BASE}
				:host { display: flex; align-items: center; justify-content: center; flex: none; width: 25.550px; height: 21px; ${on === 'active' ? 'background:#2c3136;' : ''} ${on ? 'border-bottom: 1px solid #76b9ed;' : ''} }
				div { display: flex; }
			</style>
			<div><slot></slot></div>
		`;
	}
}
customElements.define('rv-task-icon', RvTaskIcon);

class RvTaskbar extends HTMLElement {
	constructor() {
		super();
		this.attachShadow({ mode: 'open' });
		const s = (body, w = 13, h = 13) => `<svg width="${w}" height="${h}" viewBox="0 0 13 13">${body}</svg>`;
		const letter = (bg, l, fg = '#fff') => s(`<rect x="1" y="1" width="11" height="11" fill="${bg}"/><text x="6.500" y="10" text-anchor="middle" font-family="Liberation Sans" font-weight="bold" font-size="9.500" fill="${fg}">${l}</text>`);
		const icons = [
			[s('<rect x="1" y="3" width="11" height="7" rx="1" fill="none" stroke="#ddd"/><path d="M0 4v5M13 4v5" stroke="#ddd"/>')],
			[s('<path d="M1 7l6-3 5 1-6 3z" fill="#aaa"/><path d="M1 7l5 1v2L1 9z" fill="#666"/>')],
			[s('<path d="M2 4h9v8H2z" fill="#fff"/><path d="M4 4a2.500 2.500 0 0 1 5 0" fill="none" stroke="#fff"/><path d="M4 6h2v2H4zM7 6h2v2H7zM4 9h2v2H4zM7 9h2v2H7z" fill="#111"/>')],
			[s('<rect x="0" y="1" width="13" height="11" rx="1" fill="#cfe0ef"/><path d="M3 8a2 2 0 0 1 1-3.500 2.500 2.500 0 0 1 5 .5 1.500 1.500 0 0 1 0 3z" fill="none" stroke="#3180c0" stroke-width="1.200"/>')],
			[s('<rect width="13" height="13" rx="1" fill="#0e8ee9"/><circle cx="6.500" cy="6.500" r="5" fill="#fff"/><path d="M2 6.500l2.500-2v1.200h4V4.500l2.500 2-2.500 2V7.300h-4v1.200z" fill="#0e8ee9"/>')],
			[s('<rect y="2" width="13" height="10" rx="1" fill="#c7413a"/><circle cx="6.500" cy="7" r="3" fill="#fff"/><circle cx="6.500" cy="7" r="1.500" fill="#c7413a"/>')],
			[s('<path d="M5 1h8v11H5z" fill="#1e77c8"/><path d="M0 3l7-1.500v10L0 10z" fill="#0a5aa5"/><circle cx="3.500" cy="6.500" r="1.800" fill="none" stroke="#fff"/>')],
			[s('<circle cx="6.500" cy="6.500" r="6" fill="#db4437"/><path d="M6.500 6.500L1.300 9.500A6 6 0 0 0 9 12z" fill="#0f9d58"/><path d="M6.500 6.500L9 12a6 6 0 0 0 3-8.500H6.500z" fill="#f4b400"/><circle cx="6.500" cy="6.500" r="2.800" fill="#4285f4" stroke="#fff"/>'), 'open'],
			[s('<path d="M1 2h4l1 1h6v9H1z" fill="#f2c14e"/><path d="M1 5h11v2H1z" fill="#fbe6a2"/><path d="M4 9h5v3H4z" fill="#3f8fd2"/>'), 'open'],
			[letter('#2a5699', 'W')], [letter('#1f7145', 'X')], [letter('#c9472b', 'P')],
			[letter('#f4f6f9', 'R', '#1d5c9c'), 'active'],
			[letter('#f4f6f9', 'A', '#c3262e')],
			[letter('#f4f6f9', 'R', '#1d5c9c')],
			[s('<ellipse cx="6.500" cy="6.500" rx="6" ry="3.500" fill="none" stroke="#7fb2c7" stroke-width="1.800"/><path d="M3 9a5 5 0 0 1 8-5" fill="none" stroke="#3d7f9a" stroke-width="1.500"/>')]
		];
		this.shadowRoot.innerHTML = `
			<style>
				${BASE}
				:host { display: flex; align-items: center; height: 21px; background: #0d1014; color: #d8d8d8; white-space: nowrap; }
				.start { width: 25px; display: flex; justify-content: center; flex: none; }
				.search { width: 179px; height: 21px; display: flex; align-items: center; background: #3b3b3b; padding: 0 7px 0 5px; gap: 4px; font-size: 7.500px; color: #a8a8a8; flex: none; }
				.search span { flex: 1; }
				.apps { display: flex; flex: none; }
				.tray { flex: 1; display: flex; align-items: center; justify-content: flex-end; gap: 4px; padding-right: 12px; font-size: 6.300px; }
				.stack { text-align: center; line-height: 9px; }
			</style>
			<div class="start"><svg width="10" height="10" viewBox="0 0 10 10"><path d="M0 1.400L4 .8v3.800H0zM4.700.7L10 0v4.600H4.700zM0 5.300h4v3.900l-4-.6zM4.700 5.300H10V10l-5.300-.8z" fill="#fff"/></svg></div>
			<div class="search">
				<svg width="10" height="10" viewBox="0 0 10 10" style="flex:none"><circle cx="5" cy="5" r="4.200" fill="none" stroke="#fff" stroke-width="1.200"/></svg>
				<span>Taper ici pour rechercher</span>
				<svg width="6" height="10" viewBox="0 0 6 10" style="flex:none"><rect x="1.500" width="3" height="6.500" rx="1.500" fill="#999"/><path d="M.5 5a2.500 2.500 0 0 0 5 0M3 7.500V10" stroke="#999" fill="none"/></svg>
			</div>
			<div class="apps">
				${icons.map(([b, st]) => `<rv-task-icon ${st ? `state="${st}"` : ''}>${b}</rv-task-icon>`).join('')}
			</div>
			<div class="tray">
				<svg width="12" height="12" viewBox="0 0 12 12"><circle cx="6" cy="6" r="5.800" fill="#d7ecfb"/><circle cx="6" cy="6" r="4.600" fill="#1882d8"/><path d="M4.300 4.600a1.800 1.800 0 1 1 2.500 1.700l-.7.500v1M6 9v.8" fill="none" stroke="#fff" stroke-width="1.100"/></svg>
				<svg style="margin-left:1.500px" width="7" height="5" viewBox="0 0 7 5"><path d="M.5 4.500l3-3 3 3" stroke="#ccc" fill="none"/></svg>
				<svg style="margin-left:1px" width="9" height="7" viewBox="0 0 9 7"><path d="M1 1h7v5H1z" fill="none" stroke="#ccc"/><path d="M2 2h3v3H2z" fill="#ccc"/></svg>
				<svg style="margin-left:-.5px" width="8" height="7" viewBox="0 0 8 7"><path d="M0 7L8 0v7z" fill="#777"/></svg>
				<svg style="margin-left:.5px" width="9" height="8" viewBox="0 0 9 8"><path d="M0 3h2l2-2v6L2 5H0z" fill="none" stroke="#ccc" stroke-width=".8"/><path d="M5.500 2.500a2 2 0 0 1 0 3M7 1.500a4 4 0 0 1 0 5" fill="none" stroke="#ccc" stroke-width=".8"/></svg>
				<div class="stack" style="width:17px;margin-left:-2px">FRA<br>FR</div>
				<div class="stack" style="width:33px;margin-left:-1px">12:00<br>26/04/2017</div>
				<svg style="margin-left:3.500px" width="10" height="10" viewBox="0 0 10 10"><path d="M.5 1h9v6.500H5L3 9.500v-2H.5z" fill="none" stroke="#ddd"/></svg>
			</div>
		`;
	}
}
customElements.define('rv-taskbar', RvTaskbar);

class RvApp extends HTMLElement {
	constructor() {
		super();
		this.attachShadow({ mode: 'open' });
		this.shadowRoot.innerHTML = `
			<style>
				${BASE}
				:host { display: flex; flex-direction: column; width: 999px; height: 562px; overflow: hidden; background: #fff; filter: blur(.3px); }
				.main { flex: 1; display: flex; min-height: 0; }
				.left { display: flex; flex-direction: column; width: 207px; flex: none; }
				.split { width: 3px; flex: none; background: linear-gradient(90deg, #f0f0f0, #bbb 50%, #eee); }
				.right { flex: 1; display: flex; flex-direction: column; min-width: 0; }
				.view { flex: 1; display: flex; min-height: 0; }
			</style>
			<rv-titlebar></rv-titlebar>
			<rv-tabs></rv-tabs>
			<rv-ribbon></rv-ribbon>
			<rv-options></rv-options>
			<div class="main">
				<div class="left">
					<rv-properties></rv-properties>
					<rv-browser></rv-browser>
					<rv-browser-tabs></rv-browser-tabs>
				</div>
				<div class="split"></div>
				<div class="right">
					<div class="view">
						<rv-canvas></rv-canvas>
						<rv-vscroll top="202" len="10" w="9"></rv-vscroll>
					</div>
					<rv-view-bar></rv-view-bar>
				</div>
			</div>
			<rv-status></rv-status>
			<rv-taskbar></rv-taskbar>
		`;
	}
}
customElements.define('rv-app', RvApp);
</script>
</body>
</html>
